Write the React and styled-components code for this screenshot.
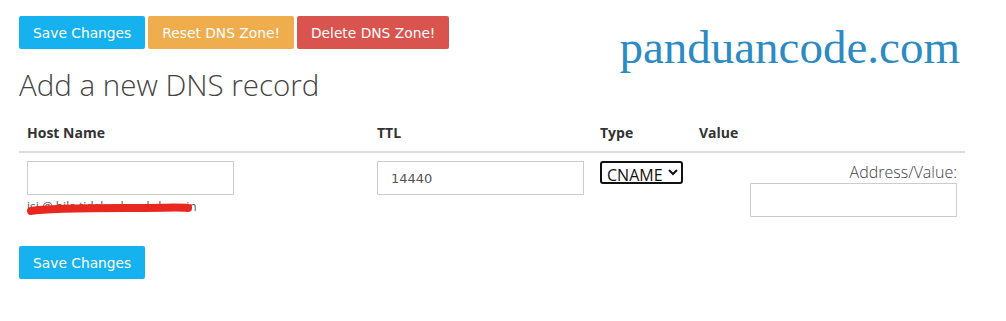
import styled, { createGlobalStyle } from "styled-components";

const GlobalStyle = createGlobalStyle`
  body {
    margin: 0;
    background: #fff;
    font-family: "Open Sans", "DejaVu Sans", sans-serif;
    color: #333;
  }
`;

function App() {
  return (
    <Page>
      <GlobalStyle />
      <TopBar>
        <ButtonGroup>
          <ActionButton $color="#16b1ef">Save Changes</ActionButton>
          <ActionButton $color="#f0ad4e">Reset DNS Zone!</ActionButton>
          <ActionButton $color="#d9534f">Delete DNS Zone!</ActionButton>
        </ButtonGroup>
        <Logo>panduancode.com</Logo>
      </TopBar>

      <Title>Add a new DNS record</Title>

      <RecordTable>
        <HeadCell>Host Name</HeadCell>
        <HeadCell>TTL</HeadCell>
        <HeadCell>Type</HeadCell>
        <HeadCell>Value</HeadCell>

        <BodyCell>
          <TextInput />
          <HintWrap>
            <Hint>isi @ bila tidak ada subdomain</Hint>
            <Scribble viewBox="0 0 166 12" preserveAspectRatio="none">
              <path
                d="M4 8 C 20 5, 60 5, 100 5 S 150 4, 161 5"
                stroke="#e8281e"
                strokeWidth="8"
                strokeLinecap="round"
                fill="none"
              />
            </Scribble>
          </HintWrap>
        </BodyCell>
        <BodyCell>
          <TextInput defaultValue="14440" />
        </BodyCell>
        <BodyCell>
          <TypeSelect defaultValue="CNAME">
            <option>A</option>
            <option>AAAA</option>
            <option>CNAME</option>
            <option>MX</option>
            <option>TXT</option>
          </TypeSelect>
        </BodyCell>
        <ValueCell>
          <FieldLabel>Address/Value:</FieldLabel>
          <TextInput />
        </ValueCell>
      </RecordTable>

      <BottomBar>
        <ActionButton $color="#16b1ef">Save Changes</ActionButton>
      </BottomBar>
    </Page>
  );
}

const Page = styled.div`
  padding: 16px 41px 0 19px;
`;

const TopBar = styled.div`
  display: flex;
  justify-content: space-between;
  align-items: flex-start;
  height: 33px;
`;

const ButtonGroup = styled.div`
  display: flex;
  gap: 3px;
`;

const ActionButton = styled.button`
  height: 33px;
  padding: 0 14px;
  border: none;
  border-radius: 2px;
  background: ${(p) => p.$color};
  color: #fff;
  font-family: "DejaVu Sans", Verdana, sans-serif;
  font-size: 13.8px;
  cursor: pointer;
`;

const Logo = styled.div`
  margin-top: 8px;
  margin-right: 5px;
  font-family: "Liberation Serif", "Times New Roman", serif;
  font-size: 47px;
  color: #2b8bc2;
  line-height: 1;
`;

const Title = styled.h2`
  margin: 16px 0 0;
  font-family: "Open Sans", sans-serif;
  font-weight: 300;
  font-size: 29.5px;
  color: #444;
  line-height: 40px;
`;

const RecordTable = styled.div`
  display: grid;
  grid-template-columns: 350px 223px 99px 1fr;
  margin-top: 8px;
`;

const HeadCell = styled.div`
  padding: 10px 8px 8px;
  border-bottom: 2px solid #ddd;
  font-size: 14px;
  font-weight: 700;
  color: #333;
  line-height: 20px;
`;

const BodyCell = styled.div`
  padding: 8px 8px;
`;

const ValueCell = styled(BodyCell)`
  display: flex;
  flex-direction: column;
  align-items: flex-end;
`;

const TextInput = styled.input`
  box-sizing: border-box;
  width: 207px;
  height: 34px;
  padding: 0 13px;
  border: 1px solid #ccc;
  border-radius: 0;
  font-family: "DejaVu Sans", Verdana, sans-serif;
  font-size: 13px;
  color: #555;
  outline: none;
`;

const HintWrap = styled.div`
  position: relative;
  padding-top: 5px;
  height: 18px;
`;

const Hint = styled.div`
  font-size: 12px;
  color: #555;
  white-space: nowrap;
  line-height: 14px;
`;

const Scribble = styled.svg`
  position: absolute;
  left: 0;
  top: 8px;
  width: 166px;
  height: 12px;
`;

const TypeSelect = styled.select`
  height: 23px;
  width: 83px;
  border: 2px solid #111;
  border-radius: 3px;
  font-family: "Open Sans", sans-serif;
  font-size: 16px;
  color: #111;
  background: #fff;
  padding: 0 0 0 1px;
`;

const FieldLabel = styled.div`
  font-size: 16px;
  font-weight: 300;
  color: #444;
  line-height: 22px;
`;

const BottomBar = styled.div`
  margin-top: 20px;
`;

export default App;
